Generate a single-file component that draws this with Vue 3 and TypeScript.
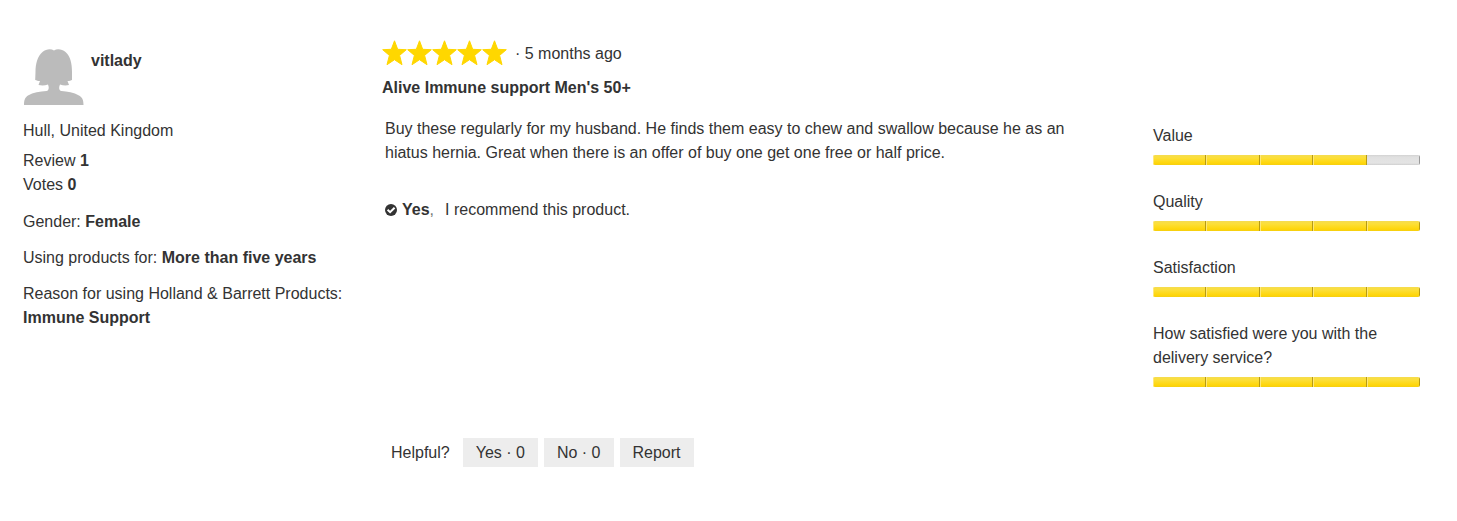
<script setup lang="ts">
import { ref } from 'vue'

interface Rating {
  label: string
  score: number
}

interface Detail {
  label: string
  value: string
}

const details: Detail[] = [
  { label: 'Gender:', value: 'Female' },
  { label: 'Using products for:', value: 'More than five years' },
  { label: 'Reason for using Holland & Barrett Products:', value: 'Immune Support' },
]

const ratings: Rating[] = [
  { label: 'Value', score: 4 },
  { label: 'Quality', score: 5 },
  { label: 'Satisfaction', score: 5 },
  { label: 'How satisfied were you with the delivery service?', score: 5 },
]

const yesVotes = ref(0)
const noVotes = ref(0)
</script>

<template>
  <article class="review">
    <aside class="author">
      <div class="identity">
        <svg class="avatar" viewBox="0 0 60 56" aria-hidden="true">
          <path
            d="M30 1.5C27 -.5 22 0 18.500 3C13.500 7 11.500 15 11.500 23L11.200 31C12.500 31.500 14 32 16 32L14.500 36C18 36.800 21 36.500 24 35.500C25.500 39 24.500 41.500 22.500 42C16 42.500 9 43.500 4 46.500C1 48.500 0 51 0 56H59.500C59.500 51 58.500 48.500 55 46.500C50 43.500 43 42.500 37.500 42C35 41.500 34.500 39 36 35.500C39 36.500 42 36.800 45 36L43.500 32C45.500 32 47 31.500 48 31V23C48 15 46.500 7 41.500 3C38 0 33 -.5 30 1.500Z"
          />
        </svg>
        <h3 class="name">vitlady</h3>
      </div>
      <p class="place">Hull, United Kingdom</p>
      <div class="counts">
        <p>Review <b>1</b></p>
        <p>Votes <b>0</b></p>
      </div>
      <p v-for="d in details" :key="d.label" class="detail">{{ d.label }} <b>{{ d.value }}</b></p>
    </aside>

    <section class="main">
      <div class="meta">
        <div class="stars" role="img" aria-label="5 out of 5 stars">
          <svg v-for="n in 5" :key="n" viewBox="0 0 25 26" aria-hidden="true">
            <path
              d="M12.5 .8L15.700 9.300L24.300 9.700L17.600 15.400L20 24.700L12.500 19.700L5 24.700L7.400 15.400L.7 9.700L9.300 9.300Z"
            />
          </svg>
        </div>
        <span class="date">· 5 months ago</span>
      </div>
      <h4 class="title">Alive Immune support Men's 50+</h4>
      <p class="body">
        Buy these regularly for my husband. He finds them easy to chew and swallow because he as an
        hiatus hernia. Great when there is an offer of buy one get one free or half price.
      </p>
      <p class="recommend">
        <svg class="tick" viewBox="0 0 12 12" aria-hidden="true">
          <circle cx="6" cy="6" r="6" />
          <path d="M2.6 5.8L5.1 8.2L9.600 3.700" />
        </svg>
        <span><b>Yes</b><span class="comma">,</span></span>
        <span class="statement">I recommend this product.</span>
      </p>
    </section>

    <section class="ratings">
      <div v-for="r in ratings" :key="r.label" class="rating">
        <span>{{ r.label }}</span>
        <div class="bar" role="img" :aria-label="`${r.score} out of 5`">
          <i v-for="n in 5" :key="n" :class="{ filled: n <= r.score }"></i>
        </div>
      </div>
    </section>

    <footer class="feedback">
      <span class="question">Helpful?</span>
      <button type="button" @click="yesVotes++">Yes · {{ yesVotes }}</button>
      <button type="button" @click="noVotes++">No · {{ noVotes }}</button>
      <button type="button">Report</button>
    </footer>
  </article>
</template>

<style>
body {
  margin: 0;
  background: #fff;
}
</style>

<style scoped>
.review {
  display: grid;
  grid-template-columns: 327px minmax(0, 1fr) 267px;
  column-gap: 32px;
  padding: 40px 37px 40px 23px;
  color: #333;
  font: 16px/24px 'Liberation Sans', Arial, sans-serif;
}
p,
h3,
h4 {
  margin: 0;
  font-size: 16px;
}
.author {
  grid-row: 1 / 3;
  padding-top: 9px;
}
.identity {
  display: flex;
  gap: 8px;
}
.avatar {
  width: 60px;
  height: 56px;
  padding-left: 1px;
  margin-right: -1px;
  fill: #bbb;
}
.place {
  margin-top: 14px;
}
.counts {
  margin-top: 6px;
}
.detail {
  margin-top: 12px;
}
.counts + .detail {
  margin-top: 13px;
}
.meta {
  display: flex;
  gap: 8px;
}
.date {
  line-height: 28px;
}
.stars {
  display: flex;
}
.stars svg {
  width: 25px;
  height: 26px;
  fill: #ffd700;
  stroke: #ffd700;
  stroke-width: 1;
  stroke-linejoin: round;
}
.title {
  margin-top: 8px;
}
.body {
  margin-top: 17px;
  padding: 0 12px 0 3px;
}
.recommend {
  display: flex;
  align-items: center;
  margin-top: 33px;
  padding-left: 3px;
}
.tick {
  width: 12px;
  height: 12px;
  margin-right: 5px;
  fill: #333;
}
.tick path {
  fill: none;
  stroke: #fff;
  stroke-width: 2;
}
.comma {
  color: #777;
}
.statement {
  margin-left: 11px;
}
.ratings {
  display: grid;
  gap: 25px;
  padding-top: 84px;
}
.bar {
  display: grid;
  grid-template-columns: repeat(5, 1fr);
  height: 10px;
  margin-top: 7px;
  border-radius: 2px;
  overflow: hidden;
}
.bar i {
  background: linear-gradient(#d2d2d2, #e0e0e0 20%, #e4e4e4 80%, #cfcfcf);
  border-right: 1px solid #999;
}
.bar i.filled {
  background: linear-gradient(#f5dc50, #fcdf38 30%, #ffd60a 80%, #f5cf10);
  border-right-color: #b79b12;
  box-shadow: inset 1px 0 #ffe878;
}
.feedback {
  grid-column: 2;
  display: flex;
  align-items: center;
  gap: 6px;
  margin-top: 51px;
  padding-left: 9px;
}
.question {
  margin-right: 7px;
}
button {
  height: 29px;
  padding: 0 13px;
  border: 0;
  background: #ededed;
  color: inherit;
  font: inherit;
  cursor: pointer;
}
</style>
